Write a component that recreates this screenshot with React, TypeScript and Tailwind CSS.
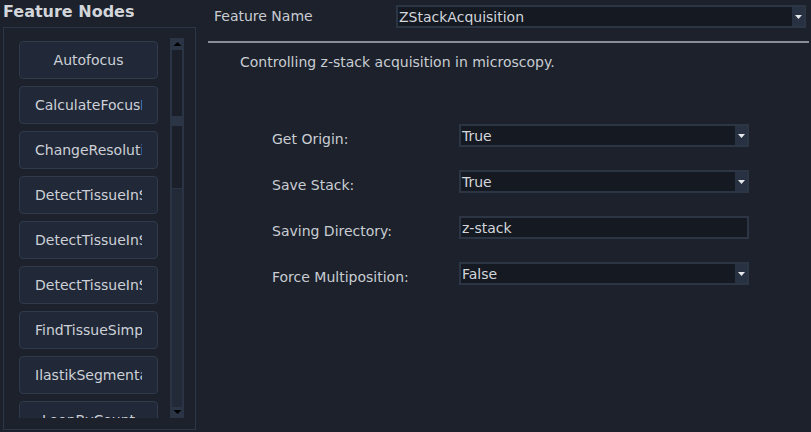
import React from 'react';

const nodes = [
  'Autofocus',
  'CalculateFocusPlane',
  'ChangeResolution',
  'DetectTissueInSlide',
  'DetectTissueInSample',
  'DetectTissueInStack',
  'FindTissueSimple',
  'IlastikSegmentation',
  'LoopByCount',
];

const fields = [
  { label: 'Get Origin:', value: 'True', combo: true },
  { label: 'Save Stack:', value: 'True', combo: true },
  { label: 'Saving Directory:', value: 'z-stack', combo: false },
  { label: 'Force Multiposition:', value: 'False', combo: true },
];

function DownArrow({ size = 7 }: { size?: number }) {
  return (
    <svg width={size + 2} height={size} viewBox="0 0 9 7">
      <path d="M1 2 L8 2 L4.5 6 Z" fill="#e6e8eb" />
    </svg>
  );
}

function ScrollArrow({ up }: { up?: boolean }) {
  return (
    <div className="h-[10px] mx-[2px] bg-[#2b3546] flex items-center justify-center">
      <svg width="9" height="6" viewBox="0 0 9 6">
        <path d={up ? 'M0.5 5 L8.5 5 L4.5 1 Z' : 'M0.5 1 L8.5 1 L4.5 5 Z'} fill="#000" />
      </svg>
    </div>
  );
}

function Field({ value, combo }: { value: string; combo: boolean }) {
  return (
    <div className="w-[290px] h-[23px] border-2 border-[#2b3544] bg-[#141922] flex items-stretch">
      <div className="flex-1 pl-[1px] flex items-center text-[#d3d6db] leading-none">{value}</div>
      {combo && (
        <div className="w-[12px] bg-[#283141] flex items-center justify-center">
          <DownArrow />
        </div>
      )}
    </div>
  );
}

export default function App() {
  return (
    <div
      className="w-[811px] h-[432px] bg-[#1c212b] flex text-[14px] text-[#c9cdd3] overflow-hidden"
      style={{ fontFamily: '"DejaVu Sans", sans-serif' }}
    >
      {/* Feature nodes panel */}
      <div className="w-[196px] flex flex-col shrink-0">
        <div className="h-[27px] pl-[3px] pt-[1px] text-[16px] font-bold text-[#d2d5da] leading-[22px]">
          Feature Nodes
        </div>
        <div className="ml-[3px] w-[193px] h-[403px] border border-[#2c3646] pt-[10px]">
          <div className="flex h-[380px]">
            <div className="w-[166px] overflow-hidden pl-[15px] pt-[3px] flex flex-col gap-[7px]">
              {nodes.map(n => (
                <div
                  key={n}
                  className="w-[139px] h-[38px] shrink-0 rounded-[4px] border border-[#2f3a4b] bg-[#212837] flex items-center"
                >
                  <div className="mx-[15px] w-[108px] overflow-hidden whitespace-nowrap text-center text-[#cdd1d7]">
                    {n}
                  </div>
                </div>
              ))}
            </div>
            <div className="w-[14px] h-[380px] bg-[#2b3444] flex flex-col py-[1px]">
              <ScrollArrow up />
              <div className="mx-[2px] flex-1 flex flex-col">
                <div className="h-[66px] bg-[#1a1f29] mt-[1px]" />
                <div className="h-[10px] bg-[#2b3546]" />
                <div className="h-[62px] bg-[#1a1f29]" />
                <div className="flex-1 bg-[#222a38] mt-[1px]" />
              </div>
              <ScrollArrow />
            </div>
          </div>
        </div>
      </div>

      {/* Feature editor */}
      <div className="flex-1 flex flex-col">
        <div className="mt-[5px] h-[23px] flex items-center">
          <div className="w-[200px] pl-[18px]">Feature Name</div>
          <div className="w-[410px] h-[23px] border-2 border-[#2b3544] bg-[#141922] flex items-stretch">
            <div className="flex-1 pl-[1px] flex items-center text-[#d3d6db] leading-none">ZStackAcquisition</div>
            <div className="w-[12px] bg-[#283141] flex items-center justify-center">
              <DownArrow />
            </div>
          </div>
        </div>
        <div className="mt-[13px] ml-[12px] mr-[2px] h-[2px] bg-[#8a8f97]" />
        <div className="mt-[11px] pl-[44px] leading-[17px]">Controlling z-stack acquisition in microscopy.</div>
        <div className="mt-[53px] flex flex-col gap-[23px]">
          {fields.map(f => (
            <div key={f.label} className="flex items-center h-[23px]">
              <div className="w-[263px] pl-[76px] pt-[7px]">{f.label}</div>
              <Field value={f.value} combo={f.combo} />
            </div>
          ))}
        </div>
      </div>
    </div>
  );
}
